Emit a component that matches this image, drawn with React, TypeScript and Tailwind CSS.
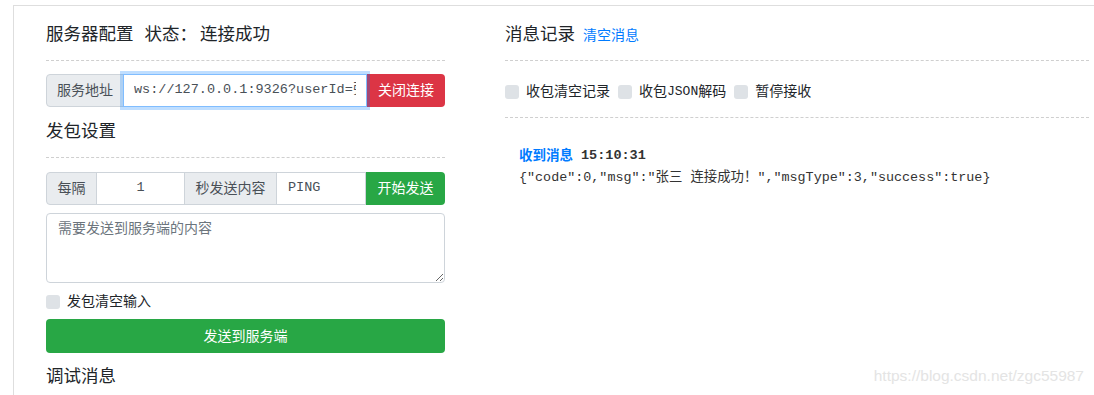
const Box = ({ children }: { children: React.ReactNode }) => (
  <label className="flex items-center mr-[8px] text-[14px] leading-[21px] text-[#212529]">
    <span className="w-[14px] h-[14px] rounded-[3px] bg-[#dee2e6] mr-[7px]" />
    {children}
  </label>
);

const Dash = ({ className }: { className: string }) => (
  <div className={`border-t border-dashed border-[#cfcfcf] ${className}`} />
);

export default function App() {
  return (
    <div className="relative h-[395px] overflow-hidden bg-white pl-[13px] pt-[5px] font-['Liberation_Sans','Noto_Sans_CJK_SC',sans-serif] text-[#212529]">
      <div className="flex h-[400px] border-l border-t border-[#dedede] pl-[32px] pr-[5px]">
        {/* left column */}
        <div className="flex w-[399px] shrink-0 flex-col pt-[18px]">
          <h5 className="flex h-[21px] items-center text-[17.5px] font-normal leading-[21px]">
            <span>服务器配置</span>
            <span className="ml-[11px]">状态：</span>
            <span className="ml-[3px]">连接成功</span>
          </h5>
          <Dash className="mt-[15px]" />

          <div className="mt-[13px] flex h-[33px] text-[14px]">
            <span className="flex w-[78px] items-center justify-center rounded-l-[4px] border border-[#ced4da] bg-[#e9ecef] text-[#495057]">
              服务地址
            </span>
            <input
              readOnly
              value="ws://127.0.0.1:9326?userId=张三"
              className="relative z-10 -ml-px min-w-0 flex-1 border border-[#80bdff] px-[10px] font-['Liberation_Mono','Noto_Sans_CJK_SC',monospace] text-[13.5px] text-[#495057] shadow-[0_0_0_3px_rgba(0,123,255,0.25)] outline-none"
            />
            <button className="w-[78px] rounded-r-[4px] bg-[#dc3545] text-white">关闭连接</button>
          </div>

          <h5 className="mt-[14px] h-[21px] text-[17.5px] font-normal leading-[21px]">发包设置</h5>
          <Dash className="mt-[15px]" />

          <div className="mt-[14px] flex h-[33px] text-[14px]">
            <span className="flex w-[51px] items-center justify-center rounded-l-[4px] border border-[#ced4da] bg-[#e9ecef] text-[#495057]">
              每隔
            </span>
            <input
              readOnly
              value="1"
              className="-ml-px w-[89px] border border-[#ced4da] text-center font-['Liberation_Mono',monospace] text-[13.5px] text-[#495057] outline-none"
            />
            <span className="-ml-px flex w-[93px] items-center justify-center border border-[#ced4da] bg-[#e9ecef] text-[#495057]">
              秒发送内容
            </span>
            <input
              readOnly
              value="PING"
              className="-ml-px min-w-0 flex-1 border border-[#ced4da] px-[11px] font-['Liberation_Mono',monospace] text-[13.5px] text-[#495057] outline-none"
            />
            <button className="w-[79px] rounded-r-[4px] bg-[#28a745] text-white">开始发送</button>
          </div>

          <textarea
            placeholder="需要发送到服务端的内容"
            className="mt-[8px] h-[70px] rounded-[4px] border border-[#ced4da] px-[11px] py-[4px] text-[14px] leading-[21px] text-[#495057] outline-none placeholder:text-[#6c757d]"
          />

          <div className="mt-[8px] flex h-[21px]">
            <Box>发包清空输入</Box>
          </div>

          <button className="mt-[7px] h-[34px] w-full rounded-[4px] bg-[#28a745] text-[14px] text-white">
            发送到服务端
          </button>

          <h5 className="mt-[13px] h-[21px] text-[17.5px] font-normal leading-[21px]">调试消息</h5>
        </div>

        {/* right column */}
        <div className="ml-[60px] flex flex-1 flex-col pt-[18px]">
          <h5 className="flex h-[21px] items-baseline text-[17.5px] font-normal leading-[21px]">
            消息记录
            <a className="ml-[8px] text-[14px] text-[#007bff]">清空消息</a>
          </h5>
          <Dash className="mt-[15px]" />

          <div className="mt-[20px] flex h-[21px]">
            <Box>收包清空记录</Box>
            <Box>
              收包<span className="font-['Liberation_Mono',monospace] text-[13px]">JSON</span>解码
            </Box>
            <Box>暂停接收</Box>
          </div>
          <Dash className="mt-[15px]" />

          <div className="mt-[28px] pl-[14px]">
            <div className="flex h-[20px] items-center text-[13.5px] font-bold">
              <span className="text-[#007bff]">收到消息</span>
              <span className="ml-[8px] font-['Liberation_Mono',monospace] text-[#333]">15:10:31</span>
            </div>
            <div className="mt-[2px] h-[20px] font-['Liberation_Mono','Noto_Sans_CJK_SC',monospace] text-[13.4px] leading-[20px] text-[#333]">
              {'{"code":0,"msg":"张三 连接成功！","msgType":3,"success":true}'}
            </div>
          </div>
        </div>
      </div>

      <div className="absolute right-[10px] top-[366px] font-['Liberation_Sans',sans-serif] text-[15.5px] leading-[20px] text-[#e4e4e4]">
        https://blog.csdn.net/zgc55987
      </div>
    </div>
  );
}
